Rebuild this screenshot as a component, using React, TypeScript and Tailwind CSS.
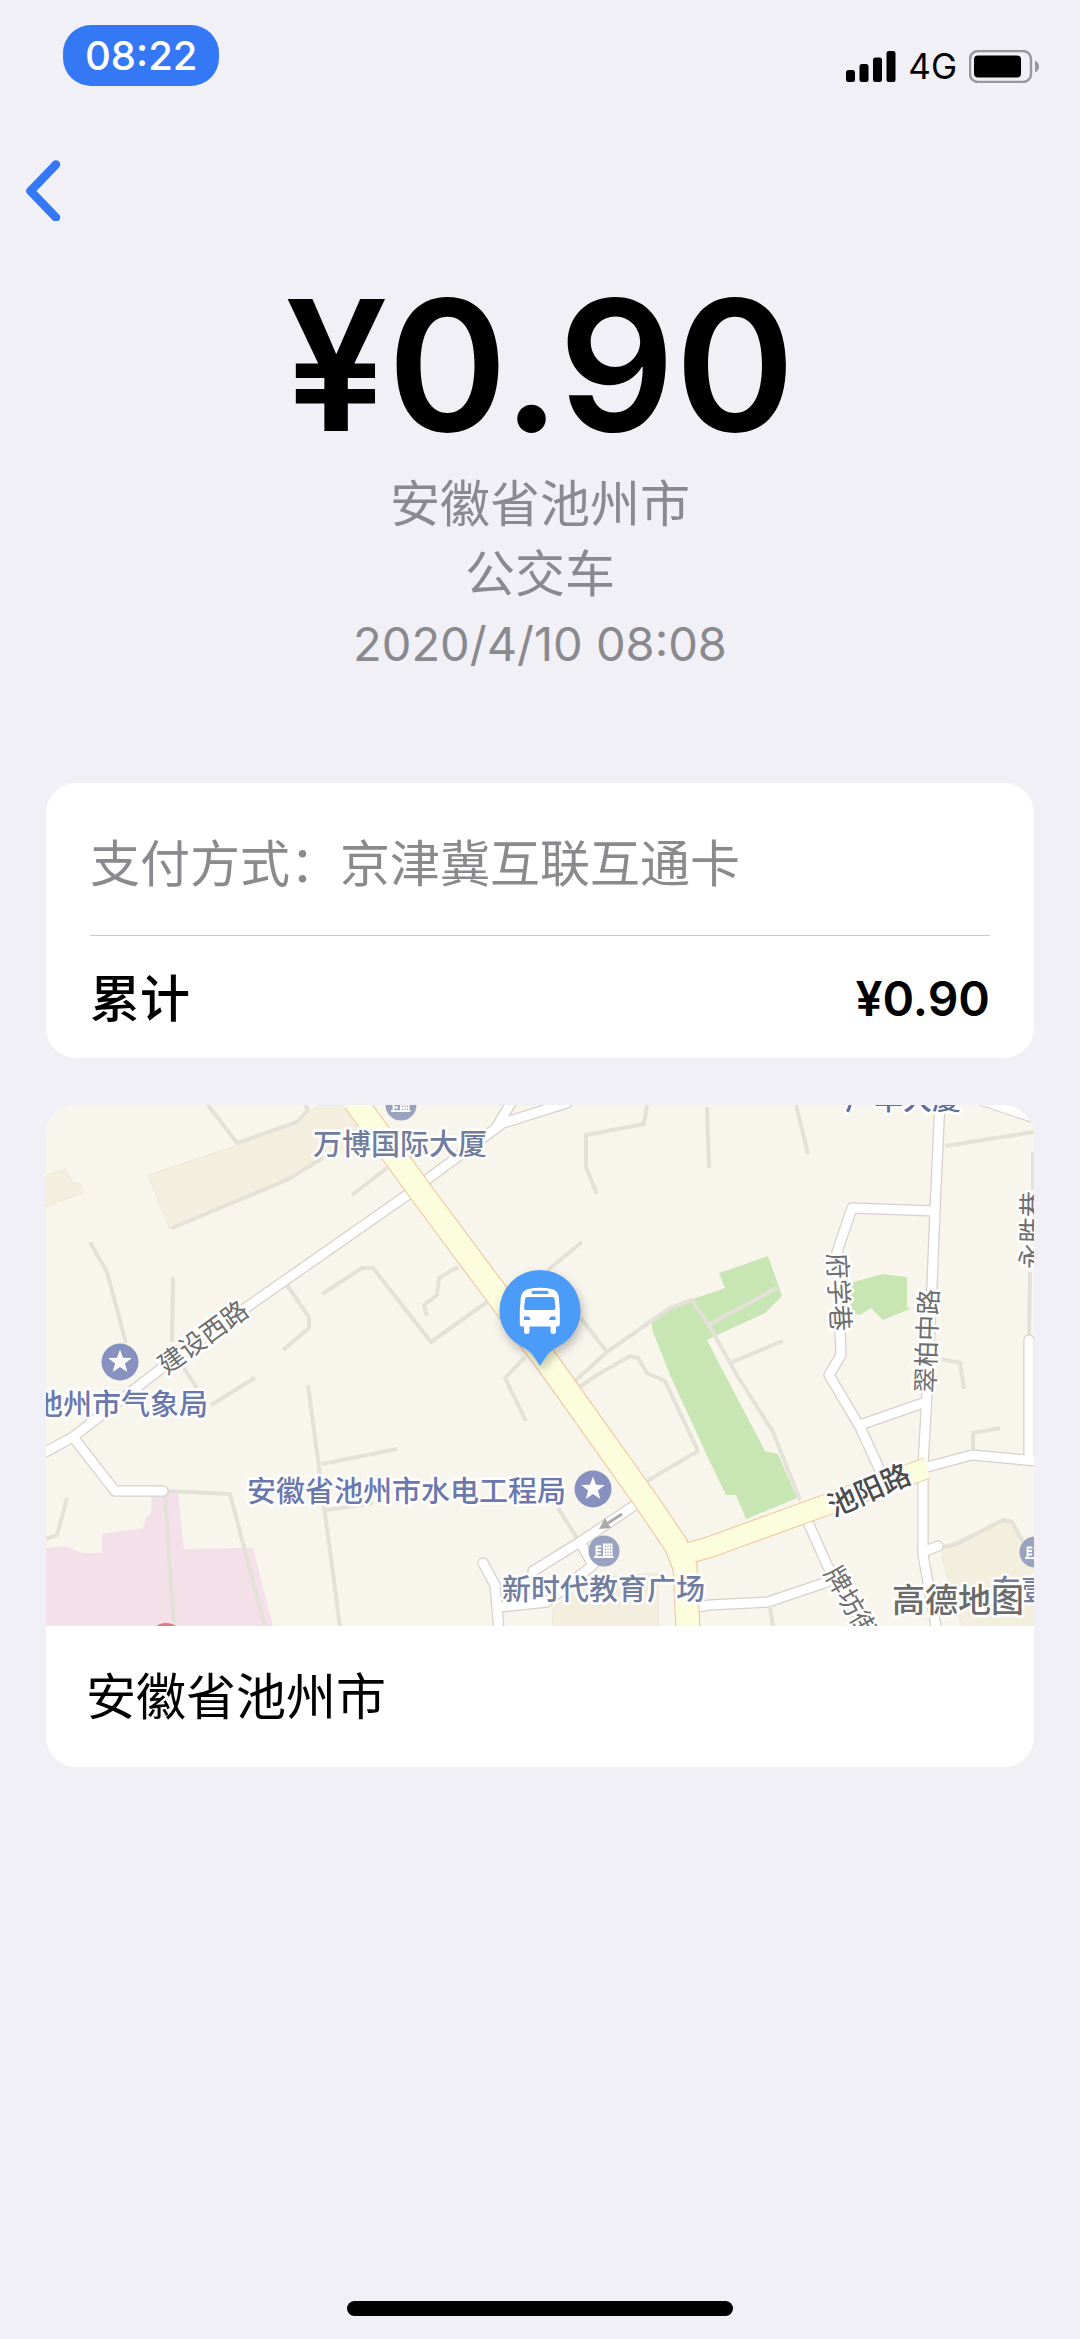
import type { ReactNode } from "react";

const MINOR_PATHS = [
  "M162 0L191 38L251 17L262 5L259 0",
  "M126 123L181 100L241 75L277 53",
  "M306 90L341 63",
  "M44 137L61 167L80 238",
  "M127 172L126 237",
  "M241 180L263 212V223L237 245",
  "M276 189L316 163L327 163L385 237L441 197",
  "M412 162L393 173L391 190L378 200L381 211",
  "M536 137L502 165",
  "M601 0L598 19L540 30V62L551 89",
  "M661 2L663 63",
  "M534 212L561 247",
  "M529 276L561 247L624 203L646 195L664 222L692 272L727 327L754 395",
  "M532 283L551 270L584 251L592 253L601 268L619 276L652 346L601 376",
  "M662 220L731 183",
  "M686 257L737 236",
  "M750 0L762 49",
  "M899 41L988 27",
  "M987 47V87",
  "M984 167L983 230",
  "M896 254L914 258L918 284",
  "M927 345V328L954 323",
  "M897 442L909 440L957 415L966 417L977 437",
  "M724 503L727 522",
  "M165 300L209 273",
  "M137 262L151 283",
  "M262 280L277 393L294 522",
  "M276 359L351 344",
  "M281 405L327 398",
  "M122 386L184 389L219 522",
  "M119 390L128 522",
  "M21 393L11 430L0 434",
  "M479 252L459 273L480 316",
  "M512 403L531 433",
];

const STREETS = [
  "M-6 350L27 332L117 262L201 202L364 88L379 76L457 18L521 -2",
  "M450 23L466 -4",
  "M27 332L69 386H117",
  "M894 -4L889 105L886 180L881 290L877 360V450L891 526",
  "M889 106L806 103L791 147L794 223L795 250L783 270L814 322L837 372",
  "M814 320L877 298",
  "M881 362L926 350L990 356",
  "M983 235V353",
  "M877 447L892 441",
  "M761 415L781 460L824 530",
  "M645 503L664 500L722 497L781 477",
  "M595 396L534 437L487 466",
  "M534 437L547 460L501 497L454 502",
  "M437 458L449 480L453 526",
];

const MAIN_ROADS = [
  { d: "M309 -4L377 90L502 258L603 400L630 440L639 462L642 526", width: 23 },
  { d: "M636 450L664 442L777 401L881 363", width: 20 },
];

function StatusBar() {
  return (
    <header className="flex items-start justify-between pt-[25px] pr-10 pl-[63px]">
      <time className="flex h-[61px] items-center rounded-[28px] bg-[#3478f6] px-[22px] text-[40px] leading-none font-medium text-white">
        08:22
      </time>
      <div className="mt-[23px] flex items-center gap-3">
        <svg className="h-8 w-[50px]" viewBox="0 0 50 32" aria-hidden="true">
          <rect x="0" y="20" width="9" height="12" rx="2.5" />
          <rect x="13.5" y="14" width="9" height="18" rx="2.5" />
          <rect x="27" y="7.500" width="9" height="24.500" rx="2.5" />
          <rect x="40.500" y="1" width="9" height="31" rx="2.5" />
        </svg>
        <span className="text-[35px] leading-9">4G</span>
        <svg className="h-[33px] w-[71px]" viewBox="0 0 71 33" aria-hidden="true">
          <rect x="1" y="1" width="61" height="31" rx="8" fill="none" stroke="#98979c" strokeWidth="2.5" />
          <rect x="5" y="5.500" width="47" height="22" rx="4" />
          <path d="M66 10.500Q70 12.500 70 16.500T66 22.500Z" fill="#98979c" />
        </svg>
      </div>
    </header>
  );
}

function StarBadge({ x, y }: { x: number; y: number }) {
  return (
    <g transform={`translate(${x} ${y})`}>
      <circle r="18.500" fill="#8791c0" />
      <path
        d="M0 -12.500L3 -4.200L11.800 -3.900L4.900 1.500L7.300 10L0 5.100L-7.300 10L-4.900 1.500L-11.800 -3.900L-3 -4.200Z"
        fill="#fff"
      />
    </g>
  );
}

function BuildingBadge({ x, y }: { x: number; y: number }) {
  return (
    <g transform={`translate(${x} ${y})`}>
      <circle r="15.500" fill="#99a2be" />
      <path d="M-10 6.200H9.500M-7.500 6V-4.500H-2.500M-7.500 -1H-3M-7.500 2.500H-3" fill="none" stroke="#fff" strokeWidth="1.800" />
      <rect x="-1" y="-7.500" width="9.500" height="14" fill="#fff" />
      <path
        d="M1.500 -5.500V5M4 -5.500V5M6.500 -5.500V5"
        stroke="#99a2be"
        strokeWidth="1.200"
        strokeDasharray="1.500 1.500"
      />
    </g>
  );
}

function BusPin() {
  return (
    <g>
      <path
        d="M494 165a40.500 40.500 0 0 1 40.500 40.500c0 17 -10 30 -24 37c-8 4 -11 10 -16.500 18.500c-5.500 -8.500 -8.500 -14.500 -16.500 -18.500c-14 -7 -24 -20 -24 -37a40.500 40.500 0 0 1 40.500 -40.500Z"
        fill="#4a9cf8"
        className="drop-shadow-[2px_5px_5px_rgba(0,0,0,0.25)]"
      />
      <path
        d="M482 184Q494 181.500 506 184Q512.500 186 512.900 193L513.800 205V219.500Q513.800 221.500 511.500 221.500H510V226.500Q510 229 507.300 229T504.500 226.500V221.500H483.500V226.500Q483.500 229 480.700 229T478 226.500V221.500H476Q473.800 221.500 473.800 219.500V205L474.700 193Q475.500 186 482 184Z"
        fill="#fff"
      />
      <rect x="485.500" y="185.800" width="17" height="3.200" rx="1.500" fill="#4a9cf8" />
      <path d="M481 192H506.500Q508.300 192 508.500 194L509.500 203Q509.500 205 507.500 205H480Q478 205 478 203L479 194Q479.200 192 481 192Z" fill="#4a9cf8" />
      <path d="M478 211.500H482.500Q484 212 484.500 215H478ZM509.500 211.500H505Q503.500 212 503 215H509.500Z" fill="#4a9cf8" />
    </g>
  );
}

type LabelProps = {
  x: number;
  y: number;
  rotate?: number;
  className: string;
  children: ReactNode;
};

// Place names are anchored at their start, street names at their middle.
function MapLabel({ x, y, rotate, className, children }: LabelProps) {
  return (
    <text
      x={x}
      y={y}
      transform={rotate === undefined ? undefined : `rotate(${rotate} ${x} ${y})`}
      textAnchor={rotate === undefined ? "start" : "middle"}
      dominantBaseline={rotate === undefined ? undefined : "central"}
      stroke="#fff"
      strokeWidth="5"
      strokeLinejoin="round"
      paintOrder="stroke"
      className={className}
    >
      {children}
    </text>
  );
}

function CityMap() {
  return (
    <svg className="block h-auto w-full bg-[#f8f5ec]" viewBox="0 0 988 521" role="img" aria-label="安徽省池州市地图">
      <g fill="#f4eedf" stroke="#ece7db">
        <path d="M102 70L192 40L251 17L262 7L274 0H296L318 34L277 53L227 80L124 124Z" />
        <path d="M-2 71L20 64L27 78H34L37 88L-2 102Z" />
        <path d="M506 524L507 503L547 473L612 468V524Z" />
        <path d="M896 453L897 442L957 415L966 417L990 455V524H917Z" />
      </g>
      <path
        d="M0 443L19 441L36 448H56V429L97 423L100 413L105 408L106 388H132L138 444L207 443L227 522H0Z"
        fill="#f3e0e9"
      />
      <g fill="#c7e6b3">
        <path d="M606 217L624 203L644 195L679 183L673 168L722 151L736 191L719 208L669 231L661 235L677 266L719 346L732 349L751 393L700 414L690 390H680L664 357L624 270L606 224Z" />
        <path d="M800 179L837 169L861 172V202L864 204L837 215L825 203L814 210L806 208Z" />
      </g>
      <g fill="none" stroke="#e4e1d9" strokeWidth="4" strokeLinejoin="round">
        {MINOR_PATHS.map((d) => (
          <path key={d} d={d} />
        ))}
      </g>
      <g fill="none" strokeLinecap="round" strokeLinejoin="round">
        <g stroke="#d6d1cb" strokeWidth="11.500">
          {STREETS.map((d) => (
            <path key={d} d={d} />
          ))}
          <path d="M935 -8L992 11" strokeWidth="17" />
        </g>
        <g stroke="#fff" strokeWidth="9">
          {STREETS.map((d) => (
            <path key={d} d={d} />
          ))}
          <path d="M935 -8L992 11" strokeWidth="15" />
        </g>
      </g>
      <g fill="none" strokeLinejoin="round">
        {MAIN_ROADS.map((road) => (
          <path key={road.d} d={road.d} stroke="#efc199" strokeWidth={road.width + 2} />
        ))}
        {MAIN_ROADS.map((road) => (
          <path key={road.d} d={road.d} stroke="#fcfddd" strokeWidth={road.width} />
        ))}
      </g>
      <path d="M576 409L562 418" stroke="#aaa" strokeWidth="3" />
      <path d="M553 424L559 413L565 423Z" fill="#aaa" />

      <circle cx="120" cy="535" r="17" fill="#e5777d" />
      <BuildingBadge x={355} y={0} />
      <BuildingBadge x={558} y={446} />
      <BuildingBadge x={989} y={447} />
      <StarBadge x={74} y={257} />
      <StarBadge x={547} y={384} />

      <g className="text-[29px] font-medium">
        <MapLabel x={267} y={50} className="fill-[#717d9e]">万博国际大厦</MapLabel>
        <MapLabel x={799} y={5} className="fill-[#5f6f9c]">广华大厦</MapLabel>
        <MapLabel x={-12} y={310} className="fill-[#6b78ad]">池州市气象局</MapLabel>
        <MapLabel x={201} y={397} className="fill-[#6b78ad]">安徽省池州市水电工程局</MapLabel>
        <MapLabel x={456} y={495} className="fill-[#717d9e]">新时代教育广场</MapLabel>
        <MapLabel x={946} y={496} className="fill-[#717d9e]">东壹</MapLabel>
        <MapLabel x={823} y={385} rotate={-24} className="fill-[#4c4c4c]">池阳路</MapLabel>
      </g>
      <g className="text-[26px] font-normal">
        <MapLabel x={157} y={232} rotate={-36} className="fill-[#6e6e6e]">建设西路</MapLabel>
        <MapLabel x={793} y={187} rotate={87} className="fill-[#6e6e6e]">府学巷</MapLabel>
        <MapLabel x={881} y={236} rotate={-88} className="fill-[#6e6e6e]">翠柏中路</MapLabel>
        <MapLabel x={985} y={125} rotate={-89} className="fill-[#6e6e6e]">永胜巷</MapLabel>
        <MapLabel x={805} y={497} rotate={60} className="fill-[#6e6e6e]">牌坊街</MapLabel>
      </g>
      <MapLabel x={846} y={507} className="fill-[#6b6b6b] text-[33px] font-medium">高德地图</MapLabel>
      <BusPin />
    </svg>
  );
}

export default function App() {
  return (
    <div
      lang="zh-CN"
      className="flex min-h-screen flex-col bg-[#f1f0f6] font-[Inter,'Noto_Sans_CJK_SC',sans-serif] text-black"
    >
      <StatusBar />
      <nav className="mt-[70px] px-5">
        <button type="button" aria-label="返回" className="block p-1">
          <svg className="h-[61px] w-10" viewBox="0 0 40 61" fill="none" aria-hidden="true">
            <path d="M32 4.500L6.500 31L32 57.500" stroke="#3478f6" strokeWidth="8.500" strokeLinecap="round" strokeLinejoin="round" />
          </svg>
        </button>
      </nav>

      <main className="flex flex-1 flex-col px-[46px]">
        <section className="mt-[50px] text-center text-[50px] leading-[70px] text-[#8a8a8e]">
          <h1 className="mb-[14px] text-[182px] leading-[180px] font-semibold text-black">¥0.90</h1>
          <p>安徽省池州市</p>
          <p>公交车</p>
          <p className="text-[47px]">2020/4/10 08:08</p>
        </section>

        <section className="mt-[104px] rounded-[30px] bg-white px-11 text-[50px] leading-[70px]">
          <p className="border-b border-[#c9c9cc] pt-[46px] pb-9 text-[#8a8a8e]">
            支付方式：京津冀互联互通卡
          </p>
          <p className="flex justify-between pt-7 pb-6 font-medium">
            <span>累计</span>
            <span className="text-[48px] font-semibold">¥0.90</span>
          </p>
        </section>

        <section className="mt-[47px] overflow-hidden rounded-[30px] bg-white">
          <CityMap />
          <p className="px-10 pt-9 pb-[35px] text-[50px] leading-[70px]">安徽省池州市</p>
        </section>
      </main>

      <footer className="flex justify-center pb-[23px]">
        <div className="h-[15px] w-[386px] rounded-full bg-black" />
      </footer>
    </div>
  );
}
